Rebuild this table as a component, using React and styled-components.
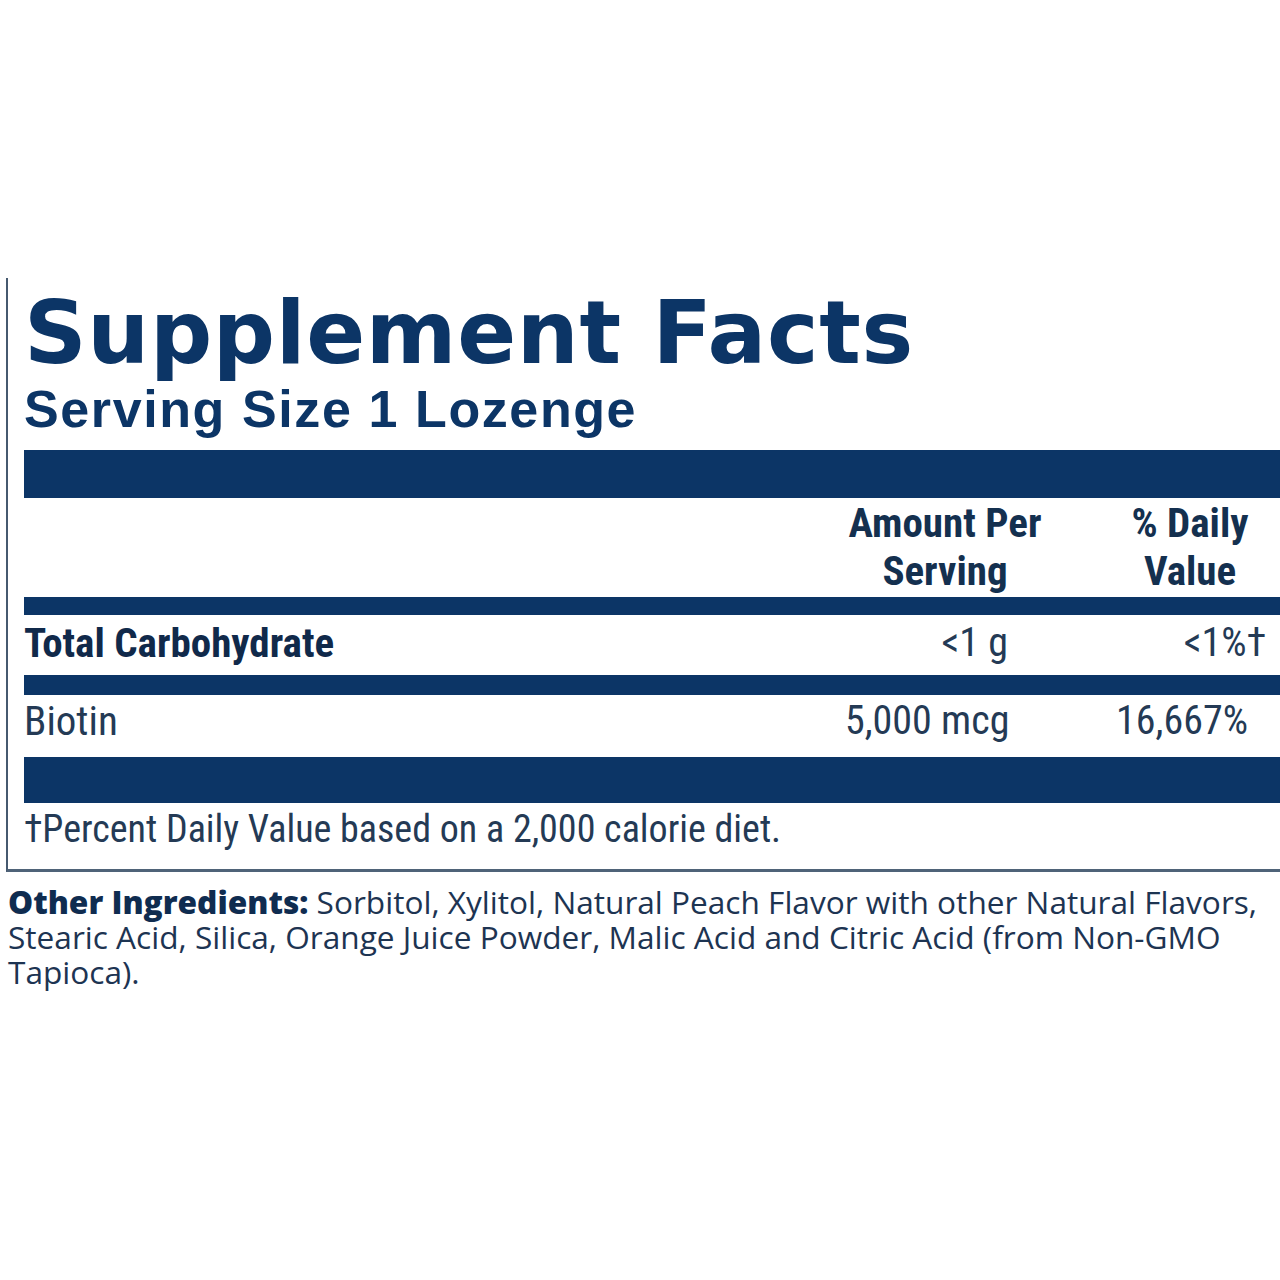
import React from 'react';
import styled, { createGlobalStyle } from 'styled-components';

const navy = '#0c3566';
const ink = '#243a55';
const condensed = '"Roboto Condensed", Roboto, sans-serif';

const GlobalStyle = createGlobalStyle`
  body {
    margin: 0;
    background: #ffffff;
  }
`;

const Page = styled.main`
  padding: 278px 0 40px;
`;

const Panel = styled.section`
  margin-left: 6px;
  padding: 10px 0 0 16px;
  border-left: 2px solid #46596f;
  border-bottom: 3px solid #4f6378;
`;

const Title = styled.h1`
  margin: 0;
  font-family: "DejaVu Sans", sans-serif;
  font-weight: bold;
  font-size: 87px;
  line-height: 90px;
  letter-spacing: 0.65px;
  color: ${navy};
  white-space: nowrap;
`;

const Serving = styled.h2`
  margin: 1px 0 11px;
  font-family: "Liberation Sans", Arial, sans-serif;
  font-weight: bold;
  font-size: 52px;
  line-height: 60px;
  letter-spacing: 1.6px;
  color: ${navy};
`;

const Bar = styled.div`
  height: ${p => p.$h}px;
  background: ${navy};
`;

const Row = styled.div`
  display: grid;
  grid-template-columns: 1fr 200px 235px;
  align-items: start;
  padding: ${p => p.$pad || '0'};
  font-family: ${condensed};
  font-size: 40px;
  line-height: 52px;
  color: ${ink};
`;

const HeadCell = styled.div`
  font-weight: bold;
  font-size: 41px;
  line-height: 48px;
  text-align: center;
  color: #14304f;
  padding-left: ${p => p.$pl || 0}px;
`;

const Label = styled.div`
  font-size: 41px;
  font-weight: ${p => (p.$bold ? 'bold' : 'normal')};
  color: ${p => (p.$bold ? '#10294a' : ink)};
`;

const Value = styled.div`
  text-align: right;
  padding-right: ${p => p.$pr}px;
  white-space: nowrap;
`;

const Dagger = styled.span`
  margin-right: -18px;
`;

const Footnote = styled.p`
  margin: 0;
  padding: 1px 0 15px;
  font-family: ${condensed};
  font-size: 38px;
  line-height: 50px;
  color: ${ink};
`;

const Ingredients = styled.p`
  margin: 0;
  padding: 12px 0 0 8px;
  font-family: "Open Sans", "Noto Sans", sans-serif;
  font-size: 31.6px;
  line-height: 35px;
  color: #1d3452;
  white-space: nowrap;

  strong {
    color: #0f2c50;
    font-weight: 800;
  }
`;

export default function App() {
  return (
    <>
      <GlobalStyle />
      <Page>
        <Panel>
          <Title>Supplement Facts</Title>
          <Serving>Serving Size 1 Lozenge</Serving>
          <Bar $h={48} />
          <Row $pad="1px 0 2px">
            <div />
            <HeadCell>Amount Per<br />Serving</HeadCell>
            <HeadCell $pl={55}>% Daily<br />Value</HeadCell>
          </Row>
          <Bar $h={18} />
          <Row $pad="2px 0 6px">
            <Label $bold>Total Carbohydrate</Label>
            <Value $pr={37}>&lt;1 g</Value>
            <Value $pr={32}>&lt;1%<Dagger>†</Dagger></Value>
          </Row>
          <Bar $h={20} />
          <Row $pad="0 0 10px">
            <Label>Biotin</Label>
            <Value $pr={37}>5,000 mcg</Value>
            <Value $pr={32}>16,667%</Value>
          </Row>
          <Bar $h={46} />
          <Footnote>†Percent Daily Value based on a 2,000 calorie diet.</Footnote>
        </Panel>
        <Ingredients>
          <strong>Other Ingredients:</strong> Sorbitol, Xylitol, Natural Peach Flavor with other Natural Flavors,<br />
          Stearic Acid, Silica, Orange Juice Powder, Malic Acid and Citric Acid (from Non-GMO<br />
          Tapioca).
        </Ingredients>
      </Page>
    </>
  );
}
